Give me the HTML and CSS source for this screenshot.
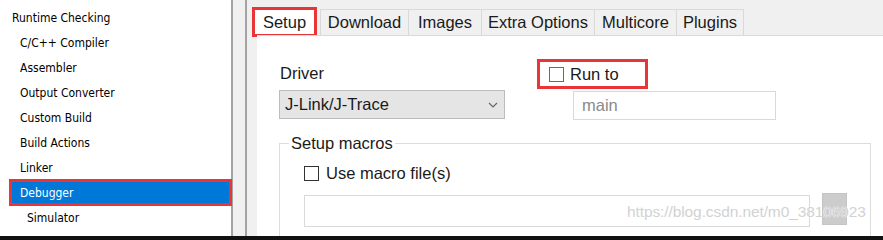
FILE: index.html
```html
<!DOCTYPE html>
<html lang="en">
<head>
  <meta charset="UTF-8" />
  <title>Options - Debugger</title>
  <link rel="stylesheet" href="styles.css">
</head>
<body>
  <div class="window">
    <ul class="tree">
      <li class="item">Runtime Checking</li>
      <li class="item child">C/C++ Compiler</li>
      <li class="item child">Assembler</li>
      <li class="item child">Output Converter</li>
      <li class="item child">Custom Build</li>
      <li class="item child">Build Actions</li>
      <li class="item child">Linker</li>
      <li class="item selected">Debugger</li>
      <li class="item sub">Simulator</li>
    </ul>
    <div class="splitter"></div>
    <div class="panel">
      <div class="tabs">
        <div class="tab active">Setup</div>
        <div class="tab w-download">Download</div>
        <div class="tab w-images">Images</div>
        <div class="tab w-extra">Extra Options</div>
        <div class="tab w-multi">Multicore</div>
        <div class="tab w-plugins">Plugins</div>
      </div>
      <div class="page">
        <div class="top-row">
          <div class="driver">
            <div class="label">Driver</div>
            <div class="select">
              <span>J-Link/J-Trace</span>
              <svg width="10" height="6" viewBox="0 0 10 6"><polyline points="1,1 5,5 9,1" fill="none" stroke="#666" stroke-width="1.2"/></svg>
            </div>
          </div>
          <div class="run-to">
            <div class="run-box">
              <span class="check focus"></span>
              <span>Run to</span>
            </div>
            <div class="field dim">main</div>
          </div>
        </div>
        <fieldset class="group">
          <legend>Setup macros</legend>
          <div class="check-row">
            <span class="check"></span>
            <span>Use macro file(s)</span>
          </div>
          <div class="file-row">
            <div class="field wide"></div>
            <div class="browse"></div>
          </div>
        </fieldset>
        <div class="watermark">https://blog.csdn.net/m0_38106923</div>
      </div>
    </div>
  </div>
  <div class="bottom-bar"></div>
</body>
</html>
```

FILE: styles.css
```css
body {
  margin: 0;
  width: 883px;
  height: 240px;
  overflow: hidden;
  background: #f0f0f0;
  font-family: "Liberation Sans", Arial, sans-serif;
  color: #1a1a1a;
}

.window {
  display: flex;
  height: 236px;
  overflow: hidden;
}

.bottom-bar {
  height: 4px;
  background: #111;
}

/* left category tree */
.tree {
  list-style: none;
  margin: 0;
  padding: 5px 0 0 0;
  width: 231px;
  flex-shrink: 0;
  background: #fff;
  border-right: 2px solid #a3a3a3;
  font-family: "DejaVu Sans Condensed", "DejaVu Sans", sans-serif;
  font-size: 12px;
  color: #000;
}

.item {
  height: 25px;
  line-height: 23px;
  padding: 2px 0 0 12px;
  box-sizing: border-box;
  white-space: nowrap;
}

.item.child {
  padding-left: 20px;
}

.item.sub {
  padding-left: 27px;
}

.item.selected {
  height: 27px;
  line-height: 20px;
  margin: -1px -1px -1px 9px;
  padding: 1px 0 0 8px;
  border: 3px solid #ea3538;
  background: #0078d7;
  color: #fff;
}

.splitter {
  width: 12px;
  flex-shrink: 0;
  border-right: 2px solid #a3a3a3;
}

/* right options panel */
.panel {
  flex: 1;
  display: flex;
  flex-direction: column;
  font-size: 16.5px;
}

.tabs {
  display: flex;
  align-items: flex-end;
  height: 35px;
  padding-left: 5px;
  flex-shrink: 0;
}

.tab {
  box-sizing: border-box;
  height: 26px;
  line-height: 25px;
  text-align: center;
  border: 1px solid #d9d9d9;
  border-bottom: none;
  margin-left: -1px;
  background: #f0f0f0;
}

.tab.active {
  position: relative;
  width: 65px;
  height: 30px;
  line-height: 24px;
  margin: 0 4px -2px 0;
  border: 3px solid #ea3538;
  background: #fff;
}

.w-download { width: 89px; }
.w-images { width: 74px; }
.w-extra { width: 114px; }
.w-multi { width: 83px; }
.w-plugins { width: 68px; }

.page {
  position: relative;
  flex: 1;
  margin-left: 10px;
  padding-left: 22px;
  background: #fff;
  border-top: 1px solid #dadada;
}

.top-row {
  display: flex;
  padding-top: 23px;
}

.driver {
  width: 226px;
}

.label {
  margin-top: 4px;
  line-height: 20px;
  padding-left: 1px;
}

.select {
  box-sizing: border-box;
  display: flex;
  align-items: center;
  justify-content: space-between;
  margin-top: 7px;
  height: 29px;
  padding: 0 6px 0 5px;
  background: #e5e5e5;
  border: 1px solid #bcbcbc;
}

.run-to {
  margin-left: 32px;
}

.run-box {
  box-sizing: border-box;
  display: flex;
  align-items: center;
  gap: 6px;
  width: 111px;
  height: 30px;
  padding-left: 9px;
  border: 3px solid #ea3538;
}

.check {
  box-sizing: border-box;
  width: 15px;
  height: 15px;
  border: 1px solid #333;
  background: #fff;
}

.check.focus {
  border-color: #1a7fd4;
}

.field {
  box-sizing: border-box;
  border: 1px solid #d9d9d9;
  background: #fff;
}

.field.dim {
  margin: 2px 0 0 36px;
  width: 203px;
  height: 29px;
  line-height: 27px;
  padding-left: 8px;
  color: #8a8a8a;
}

.group {
  box-sizing: border-box;
  width: 592px;
  margin: 13px 0 0 0;
  padding: 0 0 20px 9px;
  border: 1px solid #dcdcdc;
}

.group legend {
  padding: 0 2px;
  line-height: 20px;
}

.check-row {
  display: flex;
  align-items: center;
  gap: 7px;
  height: 20px;
  margin: 10px 0 0 15px;
}

.file-row {
  display: flex;
  align-items: flex-start;
  margin: 12px 0 0 15px;
}

.field.wide {
  width: 506px;
  height: 32px;
}

.browse {
  box-sizing: border-box;
  width: 25px;
  height: 32px;
  margin: -2px 0 0 12px;
  background: #cccccc;
  border: 1px solid #c4c4c4;
}

/* blog watermark over the capture */
.watermark {
  position: absolute;
  left: 370px;
  top: 166px;
  line-height: 20px;
  font-size: 15.5px;
  letter-spacing: -0.1px;
  color: #d2d2d2;
  text-shadow: 0 0 1px #fff, 0 0 1px #fff;
  white-space: nowrap;
}
```
